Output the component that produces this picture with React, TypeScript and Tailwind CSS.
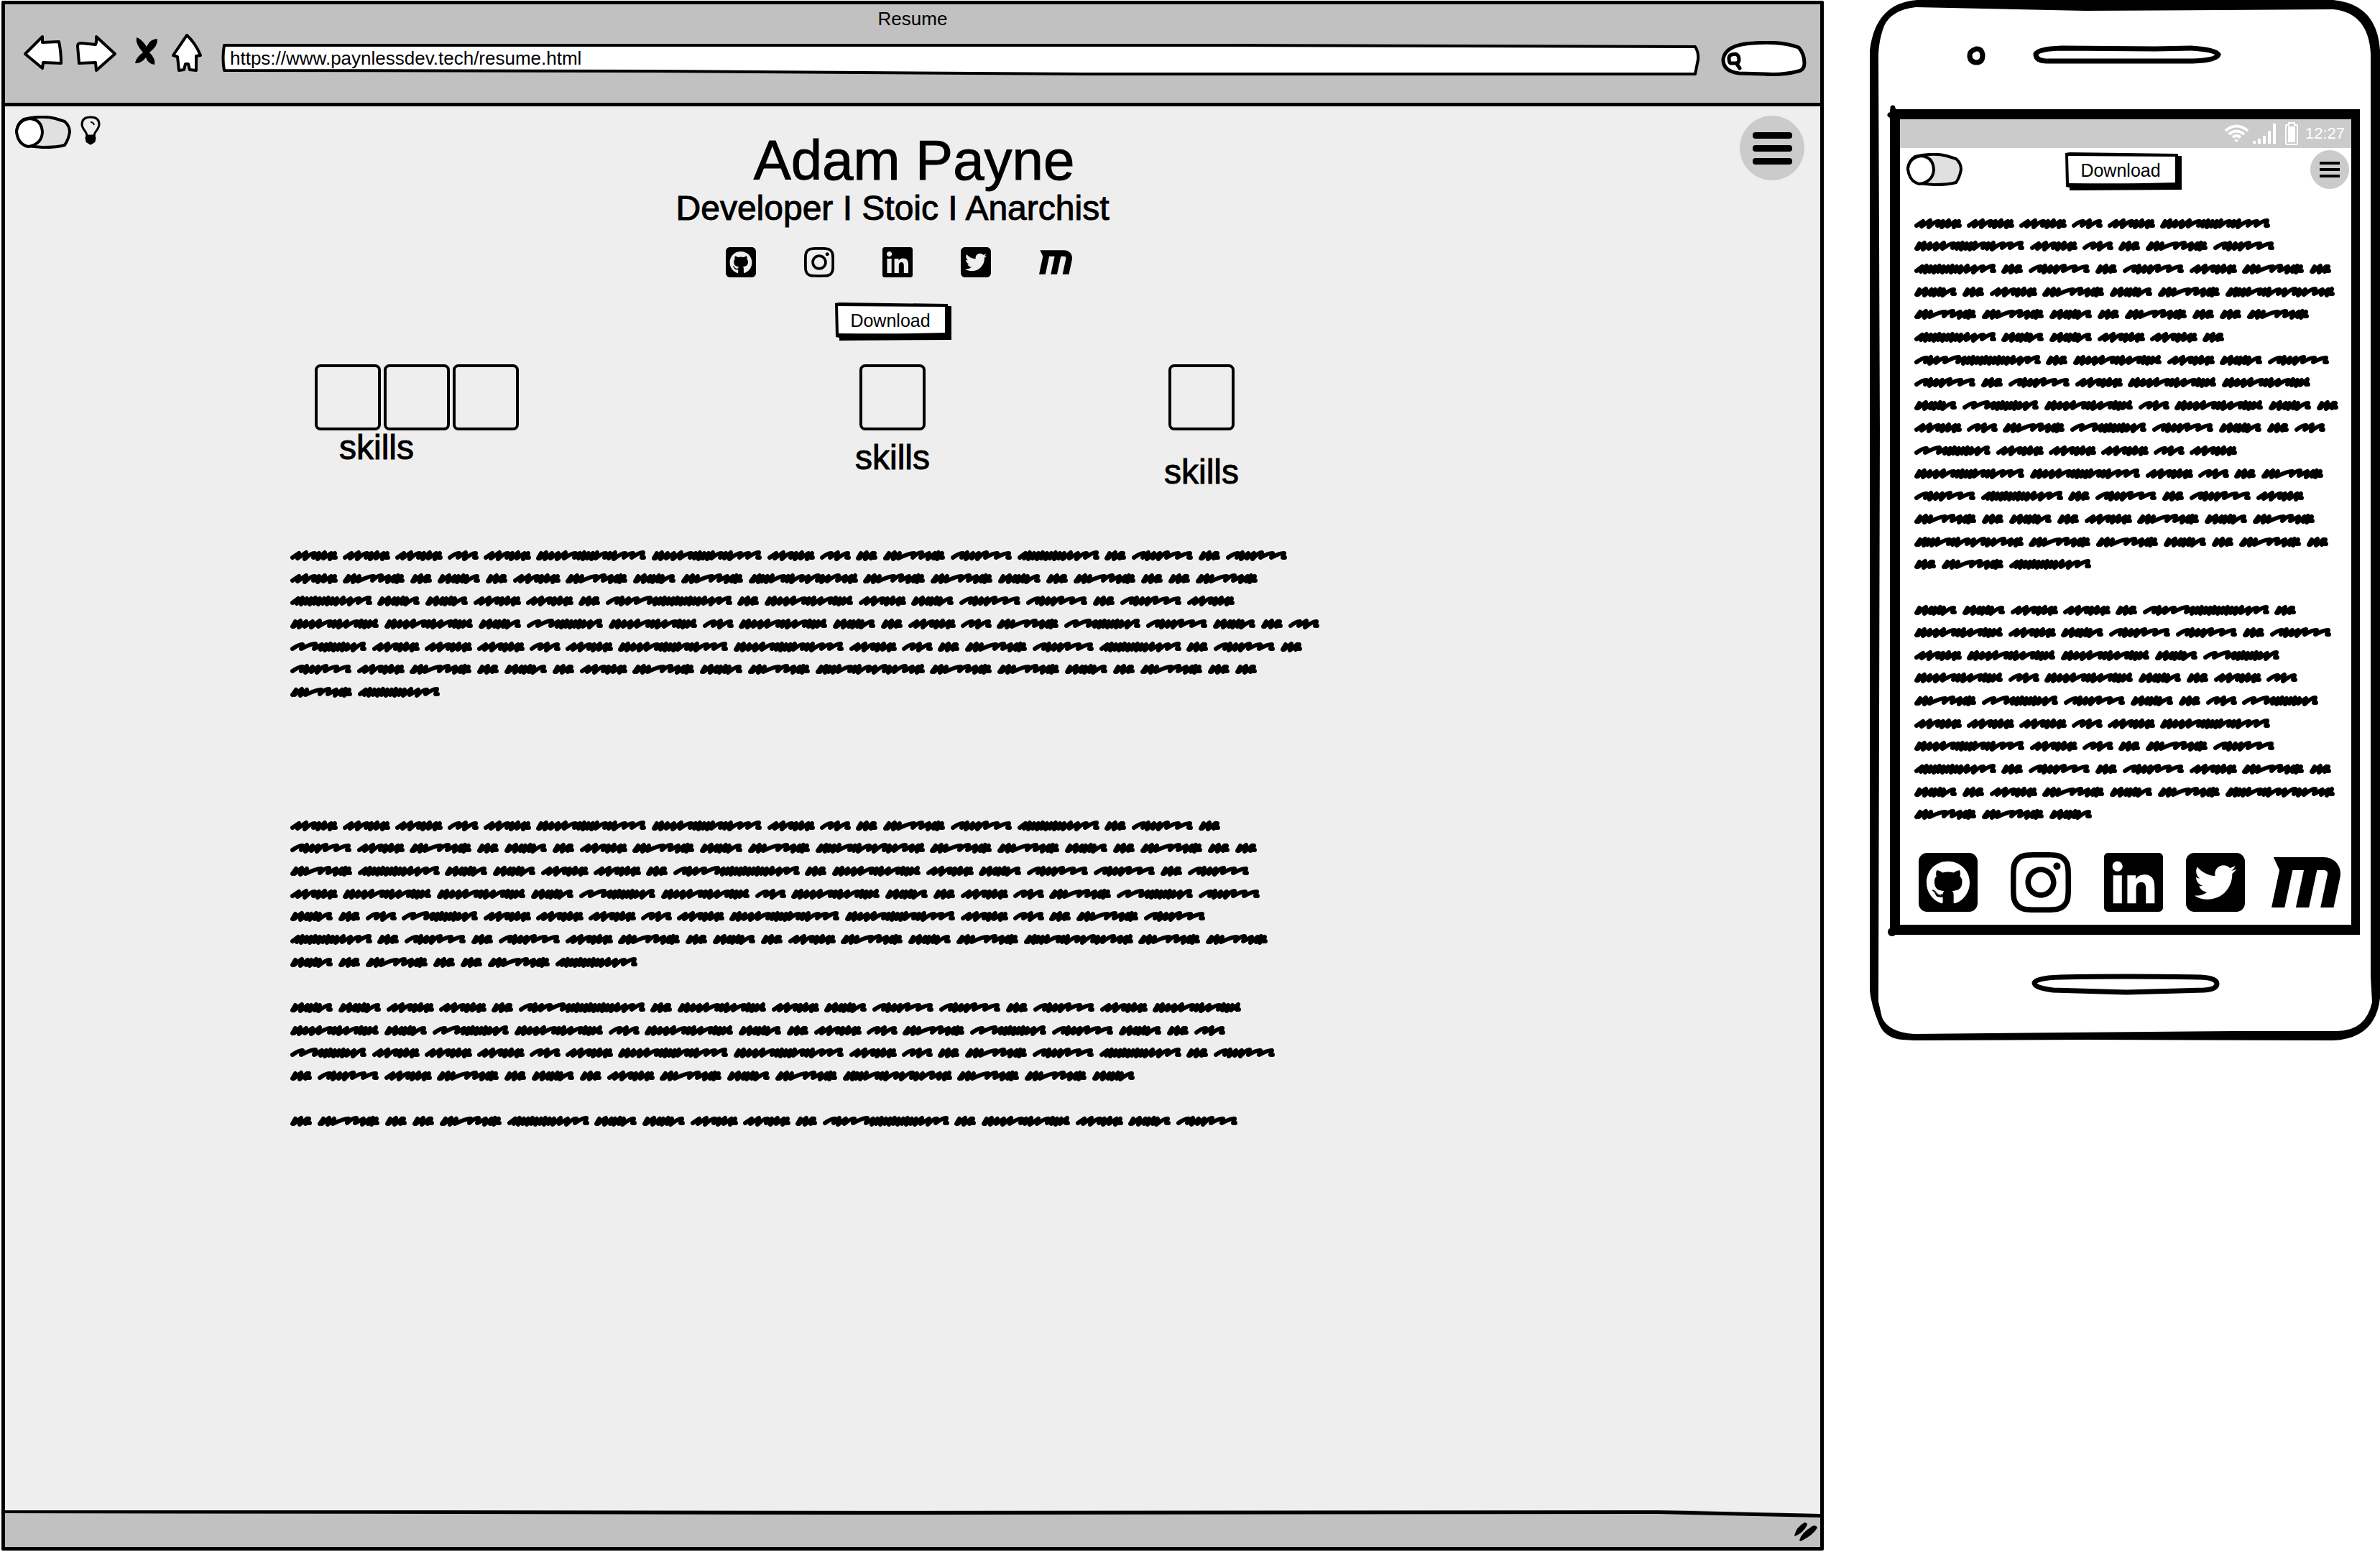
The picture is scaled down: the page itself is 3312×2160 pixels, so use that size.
import React from "react";
import { FaInstagram, FaLinkedin, FaMaxcdn, FaSquareGithub, FaSquareTwitter } from "react-icons/fa6";

/* Each placeholder word: its advance, then the horizontal step of every pen stroke. */
const WORDS: Record<string, { advance: number; steps: number[] }> = {
  A: { advance: 73, steps: [9, 10, 12, 6, 8, 9, 5] },
  r: { advance: 50, steps: [13, 9, 14] },
  u: { advance: 38, steps: [4, 8, 8, 3] },
  w: { advance: 67, steps: [4, 9, 8, 5, 7, 5, 14] },
  q: { advance: 94, steps: [5, 8, 7, 20, 11, 10, 8, 5, 5] },
  s: { advance: 93, steps: [14, 6, 8, 8, 11, 15, 16] },
  n: { advance: 121, steps: [8, 6, 6, 6, 6, 6, 6, 6, 6, 6, 9, 10, 12, 14] },
  p: { advance: 114, steps: [14, 18, 9, 6, 6, 6, 6, 6, 6, 9, 13] },
  d: { advance: 131, steps: [4, 7, 8, 9, 10, 15, 6, 7, 10, 14, 6, 6, 6, 8] },
  t: { advance: 159, steps: [5, 7, 5, 6, 7, 16, 6, 6, 14, 8, 14, 6, 8, 14, 10, 8, 5] },
  C: { advance: 161, steps: [4, 7, 8, 9, 10, 14, 6, 6, 6, 6, 6, 12, 6, 7, 14, 11, 14] },
  L: { advance: 183, steps: [14, 6, 9, 12, 18, 8, 6, 6, 6, 6, 6, 6, 6, 6, 6, 6, 8, 10, 11, 13] },
};

const INTRO = [
  "AAArACCAruqsnusus",
  "AquwuAqwqtqqwuquuq",
  "nwwAAuLudAwssusA",
  "ddwpdrdwuArqpswur",
  "pAAArACCAruqsnusu",
  "sAquwuAqwqtqqwuquu",
  "qn",
];

const DETAILS = [
  "AAArACCAruqsnusu",
  "sAquwuAqwqtqqwuquu",
  "qnwwAAuLudAwssus",
  "AddwpdrdwuArqps",
  "wurpAAArACCAruqs",
  "nususAquwuAqwqtqq",
  "wuquuqn",
  "",
  "wwAAuLudAwssusAd",
  "dwpdrdwuArqpswur",
  "pAAArACCAruqsnus",
  "usAquwuAqwqtqqw",
  "",
  "uquuqnwwAAuLudAws",
];

const MOBILE = [
  "AAArAC",
  "CAruqs",
  "nususAqu",
  "wuAqwqt",
  "qqwuquuq",
  "nwwAAu",
  "LudAws",
  "susAdd",
  "wpdrdwu",
  "Arqpswur",
  "pAAArA",
  "CCAruq",
  "snususA",
  "quwuAqwq",
  "tqqwuqu",
  "uqn",
  "",
  "wwAAuLu",
  "dAwssus",
  "Addwp",
  "drdwuAr",
  "qpswurp",
  "AAArAC",
  "CAruqs",
  "nususAqu",
  "wuAqwqt",
  "qqw",
];

function wordPath(steps: number[]) {
  let x = 3;
  let d = `M3 ${steps[0] < 8 ? 14 : 13}`;
  steps.forEach((step, i) => {
    const top = i % 3 === 1 ? 6 : 7;
    const bottom = step > 10 ? 13 : i % 2 ? 15 : 14;
    x += step;
    d += step > 10 ? `Q${x - 4} ${top - 1} ${x} ${top}` : `L${x} ${top}`;
    d += `L${x - 2} ${i === steps.length - 1 ? 13 : bottom}`;
  });
  return d + `L${x + 1} 13`;
}

function Word({ kind }: { kind: string }) {
  const { advance, steps } = WORDS[kind];
  return (
    <svg width={advance} height={20} viewBox={`0 0 ${advance} 20`} className="shrink-0" aria-hidden="true">
      <path d={wordPath(steps)} fill="none" stroke="#000" strokeWidth="6" strokeLinecap="round" strokeLinejoin="round" />
    </svg>
  );
}

function Scribble({ lines, className, label }: { lines: string[]; className: string; label: string }) {
  return (
    <div role="img" aria-label={label} className={"grid auto-rows-fr " + className}>
      {lines.map((line, i) => (
        <div key={i} className="flex items-center">
          {line.split("").map((kind, j) => (
            <Word key={j} kind={kind} />
          ))}
        </div>
      ))}
    </div>
  );
}

function Toggle({ label }: { label: string }) {
  return (
    <label className="relative block h-[46px] w-[78px] shrink-0">
      <input type="checkbox" aria-label={label} className="absolute inset-0 size-full opacity-0" />
      <svg viewBox="0 0 78 46" className="size-full" fill="#e0e0e0" stroke="#000" strokeLinejoin="round" aria-hidden="true">
        <path d="M12 5Q38 -1 56 4L69 8Q76 14 76 23Q74 34 69 41Q60 44 38 44L15 42Q3 33 2 22Q3 11 12 5Z" strokeWidth="4" />
        <path d="M20 4Q37 5 38 23Q37 40 18 43Q4 40 2 22Q4 6 20 4Z" fill="#fff" strokeWidth="4" />
      </svg>
    </label>
  );
}

function DownloadButton() {
  return (
    <button type="button" className="relative h-[53px] w-[162px] shrink-0 pr-2 pb-1 text-[25px] leading-[30px]">
      <svg viewBox="0 0 162 53" className="absolute inset-0 size-full" aria-hidden="true">
        <path d="M0 1L6 0L157 2V5H162V52L6 53V49L1 48Z" />
        <path d="M4 5L153 6V42Q90 44 5 43Z" fill="#fff" />
      </svg>
      <span className="relative">Download</span>
    </button>
  );
}

const SOCIALS = [
  { name: "GitHub", Icon: FaSquareGithub },
  { name: "Instagram", Icon: FaInstagram },
  { name: "LinkedIn", Icon: FaLinkedin },
  { name: "Twitter", Icon: FaSquareTwitter },
];

function SkillBox() {
  return <div className="size-[92px] rounded-lg border-4 border-black" />;
}

function Browser() {
  return (
    <section className="flex flex-col pt-px pr-0.5 pb-0.5 pl-0.5">
      <div className="flex flex-1 flex-col rounded-[2px] border-[5px] border-black bg-[#eee]">
        <header className="border-b-[5px] border-black bg-[#c1c1c1] pb-[37px]">
          <p className="h-10 text-center text-[26px] leading-10">Resume</p>
          <div className="flex h-[60px] items-start pr-[19px] pl-[25px]">
            <button type="button" aria-label="Back">
              <svg width="56" height="60" viewBox="0 0 56 60" fill="#fff" stroke="#000" strokeWidth="4" strokeLinejoin="round">
                <path d="M27 5L3 29L27 49L28 41L53 42Q53 26 50 12L27 13Z" />
              </svg>
            </button>
            <button type="button" aria-label="Forward" className="ml-[17px]">
              <svg width="58" height="60" viewBox="0 0 58 60" fill="#fff" stroke="#000" strokeWidth="4" strokeLinejoin="round">
                <path d="M29 5Q30 11 28 16L8 14Q3 14 3 18L5 42L28 41L29 52L55 29Z" />
              </svg>
            </button>
            <button type="button" aria-label="Stop" className="ml-[25px]">
              <svg width="32" height="60" viewBox="0 0 32 60">
                <path d="M2 6Q9 8 16 19Q21 8 31 8Q32 18 20 27Q29 36 27 44Q18 43 15 34Q8 43 0 42Q1 34 11 27Q0 15 2 6Z" />
              </svg>
            </button>
            <button type="button" aria-label="Home" className="ml-[18px]">
              <svg width="44" height="60" viewBox="0 0 44 60" fill="#fff" stroke="#000" strokeWidth="4" strokeLinejoin="round">
                <path d="M22 3L3 31L9 33L11 52L18 51L20 43H24L26 51L35 52L35 32L41 31Q34 14 22 3Z" />
              </svg>
            </button>
            <div className="relative mt-[15px] ml-[26px] h-[45px] flex-1">
              <svg viewBox="0 0 2058 45" preserveAspectRatio="none" className="absolute inset-0 size-full" fill="#fff" stroke="#000" strokeWidth="4" strokeLinejoin="round" aria-hidden="true">
                <path d="M4 2L1400 2L2051 4Q2056 12 2055 22L2051 42L1200 42L600 38L4 37Q1 20 4 2Z" />
              </svg>
              <input
                type="text"
                aria-label="Address"
                defaultValue="https://www.paynlessdev.tech/resume.html"
                className="relative h-10 w-full bg-transparent pl-[12px] text-[26px] outline-none"
              />
            </div>
            <div className="relative mt-[11px] ml-[29px] h-[50px] w-[119px] shrink-0">
              <svg viewBox="0 0 119 50" className="absolute inset-0 size-full" fill="#fff" stroke="#000" strokeWidth="5" strokeLinecap="round" strokeLinejoin="round" aria-hidden="true">
                <path d="M25 45Q2 42 3 25Q6 5 45 3Q85 0 108 9Q116 18 116 31Q116 40 108 42Q85 48 60 46Z" />
                <path d="M12 30Q9 20 15 19Q25 16 25 26Q25 31 20 31H13ZM22 32L26 38" strokeWidth="5" />
              </svg>
              <input type="search" aria-label="Search" className="relative h-full w-full bg-transparent pr-4 pl-8 text-[26px] outline-none" />
            </div>
          </div>
        </header>

        <main className="flex-1">
          <div className="grid grid-cols-[1fr_auto_1fr] items-start pt-[13px] pr-[22px] pl-[14px]">
            <div className="flex gap-[13px]">
              <Toggle label="Dark mode" />
              <svg width="28" height="42" viewBox="0 0 28 42" fill="none" stroke="#000" strokeWidth="3" aria-hidden="true">
                <path d="M9 28C9 22 2 19 2 12C2 5 7 2 14 2C21 2 26 5 26 12C26 19 19 22 19 28" />
                <path d="M14 9Q18 9 19 13" strokeWidth="2" />
                <path d="M9 28H19L20 31L19 36L14 39L9 36L8 31Z" fill="#000" strokeLinejoin="round" />
              </svg>
            </div>
            <h1 className="mt-[23px] pl-3 text-[78px] leading-[78px] [-webkit-text-stroke:1px_black]">Adam Payne</h1>
            <button type="button" aria-label="Menu" className="flex size-[90px] flex-col items-center justify-center gap-[9px] justify-self-end rounded-full bg-[#cbcbcb]">
              <span className="h-[9px] w-[55px] rounded-sm bg-black" />
              <span className="h-[9px] w-[55px] rounded-sm bg-black" />
              <span className="h-[9px] w-[55px] rounded-sm bg-black" />
            </button>
          </div>

          <div className="mt-1 flex flex-col items-center pr-[56px]">
            <p className="text-5xl leading-[48px] [-webkit-text-stroke:1px_black]">Developer I Stoic I Anarchist</p>
            <nav aria-label="Profiles" className="mt-[27px] flex items-center gap-[67px] pl-[18px]">
              {SOCIALS.map(({ name, Icon }) => (
                <a key={name} href="#" aria-label={name}>
                  <Icon className="h-[48px] w-[42px]" />
                </a>
              ))}
              <a href="#" aria-label="MaxCDN">
                <FaMaxcdn className="size-[46px]" />
              </a>
            </nav>
            <div className="mt-[32px] pl-0.5">
              <DownloadButton />
            </div>
          </div>

          <div className="mt-[33px] flex items-start pl-[431px] text-5xl leading-[48px] [-webkit-text-stroke:1px_black]">
            <div>
              <div className="flex gap-1">
                <SkillBox />
                <SkillBox />
                <SkillBox />
              </div>
              <p className="pl-[34px]">skills</p>
            </div>
            <div className="ml-[468px] flex flex-col items-center gap-[14px]">
              <SkillBox />
              <p>skills</p>
            </div>
            <div className="ml-[326px] flex flex-col items-center gap-[34px]">
              <SkillBox />
              <p>skills</p>
            </div>
          </div>

          <div className="pl-[397px]">
            <Scribble lines={INTRO} label="Introduction text" className="mt-[76px] h-[222px]" />
            <Scribble lines={DETAILS} label="Experience text" className="mt-[154px] h-[443px]" />
          </div>
        </main>

        <footer className="relative flex h-[51px] items-center justify-end pt-2 pr-1">
          <svg viewBox="0 0 2526 51" preserveAspectRatio="none" className="absolute inset-0 size-full" aria-hidden="true">
            <path d="M0 0H2350L2526 5V51H0Z" fill="#c1c1c1" />
            <path d="M0 -1L1200 1L2300 0L2526 5V10L2300 5L1200 6L0 4Z" />
          </svg>
          <svg width="32" height="26" viewBox="0 0 32 26" className="relative" aria-hidden="true">
            <path d="M0 18Q3 6 14 0Q18 0 18 3Q13 14 1 19ZM7 25Q9 15 25 5Q30 3 32 7Q27 17 9 26Z" />
          </svg>
        </footer>
      </div>
    </section>
  );
}

function Phone() {
  return (
    <section className="relative self-start">
      <svg viewBox="0 0 710 1450" preserveAspectRatio="none" className="absolute inset-0 size-full" aria-hidden="true">
        <path
          fillRule="evenodd"
          d="M0 70Q8 4 66 0H645Q706 6 710 70V1390Q704 1446 645 1449L300 1448L62 1449L45 1448Q20 1446 12 1424Q2 1400 0 1380ZM12 75L14 600L12 1395L17 1417Q26 1438 62 1440L510 1436H650Q690 1436 699 1396L697 1360V75Q694 18 645 13L300 15L64 10Q30 14 20 36Q13 54 12 75Z"
        />
      </svg>
      <div className="relative">
        <div className="flex h-[152px] items-start gap-[66px] pt-[63px] pl-[135px]">
          <svg width="26" height="28" viewBox="0 0 26 28" aria-hidden="true">
            <path d="M13 5Q21 4 22 14Q22 24 13 24Q4 23 4 14Q4 8 13 5Z" fill="#fff" stroke="#000" strokeWidth="7" />
          </svg>
          <svg width="262" height="27" viewBox="0 0 262 27" aria-hidden="true">
            <path d="M40 4L170 5L220 4Q254 6 258 13Q255 21 222 22H20Q4 22 4 12Q8 5 40 4Z" fill="#fff" stroke="#000" strokeWidth="7" />
          </svg>
        </div>

        <div className="relative mr-7 ml-7 border-t-[14px] border-r-[12px] border-b-[14px] border-l-[14px] border-black bg-white">
          <svg width="24" height="24" viewBox="0 0 24 24" className="absolute -top-5 -left-[18px]" aria-hidden="true">
            <path d="M8 4L11 18L4 14" fill="none" stroke="#000" strokeWidth="7" strokeLinecap="round" strokeLinejoin="round" />
          </svg>
          <svg width="14" height="14" viewBox="0 0 14 14" className="absolute -bottom-4 -left-[18px]" aria-hidden="true">
            <circle cx="7" cy="8" r="6" />
          </svg>
          <div className="flex h-10 items-center justify-end bg-[#cbcbcb] pr-[9px] text-white">
            <svg width="35" height="26" viewBox="0 0 35 26" fill="none" stroke="currentColor" strokeWidth="4" aria-label="Wi-Fi">
              <path d="M2 9Q17 -4 33 9M7 14Q17 5 28 14M12 18Q17 14 23 18" />
              <path d="M14 22Q17 20 20 22L17 25Z" fill="currentColor" stroke="none" />
            </svg>
            <svg width="32" height="28" viewBox="0 0 32 28" fill="currentColor" className="ml-[5px]" aria-label="Signal">
              <path d="M0 24H4V28H0ZM7 21H11V28H7ZM14 17H18V28H14ZM21 10H25V28H21ZM28 0H32V28H28Z" />
            </svg>
            <svg width="18" height="32" viewBox="0 0 18 32" className="ml-[13px]" aria-label="Battery">
              <path d="M2 4H5V1H13V4H16Q17 4 17 6V29Q17 31 15 31H3Q1 31 1 29V6Q1 4 2 4Z" fill="none" stroke="currentColor" strokeWidth="2" />
              <path d="M4 6H14V28H4Z" fill="currentColor" />
            </svg>
            <time className="ml-[10px] text-[22px] leading-10">12:27</time>
          </div>

          <div className="flex items-start pt-[3px] pr-[3px] pl-[9px]">
            <div className="flex flex-1 items-start pt-1">
              <Toggle label="Dark mode on phone" />
            </div>
            <div className="pt-[3px] pr-[12px]">
              <DownloadButton />
            </div>
            <div className="flex flex-1 justify-end">
              <button type="button" aria-label="Menu" className="flex size-[54px] flex-col items-center justify-center gap-[5px] rounded-full bg-[#cbcbcb]">
                <span className="h-1 w-7 bg-black" />
                <span className="h-1 w-7 bg-black" />
                <span className="h-1 w-7 bg-black" />
              </button>
            </div>
          </div>

          <Scribble lines={MOBILE} label="Resume text" className="mt-[30px] ml-5 h-[854px]" />

          <nav aria-label="Profiles on phone" className="mt-[31px] flex items-center pb-[11px] pl-[26px]">
            <a href="#" aria-label="GitHub">
              <FaSquareGithub className="h-24 w-[82px]" />
            </a>
            <a href="#" aria-label="Instagram" className="ml-[46px]">
              <FaInstagram className="h-24 w-[84px]" />
            </a>
            <a href="#" aria-label="LinkedIn" className="ml-[46px]">
              <FaLinkedin className="h-24 w-[82px]" />
            </a>
            <a href="#" aria-label="Twitter" className="ml-8">
              <FaSquareTwitter className="h-24 w-[82px]" />
            </a>
            <a href="#" aria-label="MaxCDN" className="ml-[37px]">
              <FaMaxcdn className="size-24" />
            </a>
          </nav>
        </div>

        <div className="flex h-[148px] items-start pt-[54px] pl-[225px]">
          <button type="button" aria-label="Home button">
            <svg width="262" height="30" viewBox="0 0 262 30" aria-hidden="true">
              <path d="M40 5Q130 3 235 5Q258 6 258 14Q258 22 240 23L132 26L30 23Q4 20 4 13Q6 6 40 5Z" fill="#fff" stroke="#000" strokeWidth="7" />
            </svg>
          </button>
        </div>
      </div>
    </section>
  );
}

export default function App() {
  return (
    <div className="grid min-h-screen grid-cols-[minmax(0,1fr)_710px] gap-[62px] bg-white font-['Liberation_Sans',sans-serif] text-black">
      <Browser />
      <Phone />
    </div>
  );
}
